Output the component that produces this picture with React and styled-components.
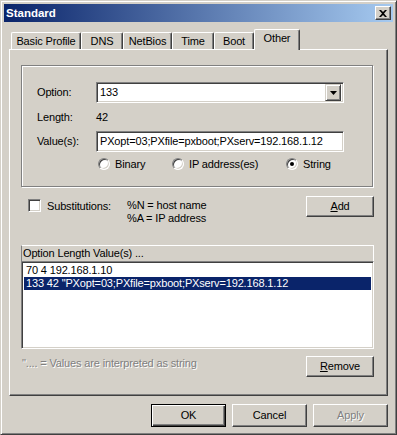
import React from 'react';
import styled, { createGlobalStyle, css } from 'styled-components';

const FACE = '#D4D0C8';
const SHADOW = '#808080';
const DARK = '#404040';
const HILITE = '#FFFFFF';
const NAVY = '#0A246A';

const GlobalStyle = createGlobalStyle`
  html, body { margin: 0; padding: 0; background: ${FACE}; }
  body {
    font-family: "Liberation Sans", Arial, sans-serif;
    font-size: 11px;
    line-height: 13px;
    letter-spacing: -0.15px;
    color: #000;
  }
  * { box-sizing: border-box; }
`;

const Window = styled.div`
  width: 397px;
  height: 435px;
  background: ${FACE};
  border: 1px solid;
  border-color: ${FACE} ${DARK} ${DARK} ${FACE};
  box-shadow: inset 1px 1px ${HILITE}, inset -1px -1px ${SHADOW};
  padding: 3px;
  display: flex;
  flex-direction: column;
`;

const TitleBar = styled.div`
  height: 18px;
  display: flex;
  align-items: center;
  justify-content: space-between;
  padding: 0 2px 0 2px;
  background: linear-gradient(to right, ${NAVY}, #A6CAF0);
`;

const Title = styled.span`
  color: #fff;
  font-weight: bold;
  font-size: 11.5px;
  letter-spacing: 0;
`;

const CloseBtn = styled.div`
  width: 16px;
  height: 14px;
  background: ${FACE};
  border: 1px solid;
  border-color: ${HILITE} ${DARK} ${DARK} ${HILITE};
  box-shadow: inset -1px -1px ${SHADOW};
  display: flex;
  align-items: center;
  justify-content: center;
  padding-right: 1px;
`;

const Body = styled.div`
  padding: 7px 5px 0;
  display: flex;
  flex-direction: column;
`;

const TabStrip = styled.div`
  height: 20px;
  display: flex;
  align-items: flex-end;
  padding-left: 2px;
  position: relative;
  z-index: 1;
`;

const Tab = styled.div`
  width: ${(p) => p.$w}px;
  height: ${(p) => (p.$active ? 21 : 17)}px;
  margin-bottom: ${(p) => (p.$active ? -1 : 0)}px;
  background: ${FACE};
  border-top: 1px solid ${HILITE};
  border-left: 1px solid ${HILITE};
  border-right: 1px solid ${DARK};
  border-radius: 2px 2px 0 0;
  box-shadow: inset -1px 0 ${SHADOW};
  display: flex;
  justify-content: center;
  align-items: flex-start;
  padding-top: 2px;
  white-space: nowrap;
`;

const Panel = styled.div`
  height: 347px;
  border: 1px solid;
  border-color: ${HILITE} ${DARK} ${DARK} ${HILITE};
  box-shadow: inset -1px -1px ${SHADOW};
  padding: 15px 13px 0 11px;
  display: flex;
  flex-direction: column;
`;

const GroupBox = styled.div`
  width: 352px;
  height: 122px;
  border: 1px solid ${SHADOW};
  box-shadow: 1px 1px 0 ${HILITE}, inset 1px 1px 0 ${HILITE};
  padding: 16px 0 0 15px;
  display: grid;
  grid-template-columns: 59px 248px;
  grid-template-rows: 21px 28px 21px 24px;
  align-items: center;
`;

const Label = styled.span`
  white-space: nowrap;
`;

const Value = styled.span`
  padding-left: 0;
`;

const Sunken = css`
  background: #fff;
  border: 1px solid;
  border-color: ${SHADOW} ${HILITE} ${HILITE} ${SHADOW};
  box-shadow: inset 1px 1px ${DARK}, inset -1px -1px ${FACE};
`;

const Combo = styled.div`
  ${Sunken}
  height: 21px;
  display: flex;
  align-items: center;
  padding: 2px 2px 2px 3px;
`;

const ComboText = styled.span`
  flex: 1;
`;

const DropBtn = styled.div`
  width: 16px;
  height: 17px;
  background: ${FACE};
  border: 1px solid;
  border-color: ${FACE} ${DARK} ${DARK} ${FACE};
  box-shadow: inset 1px 1px ${HILITE}, inset -1px -1px ${SHADOW};
  display: flex;
  align-items: center;
  justify-content: center;
`;

const TextInput = styled.div`
  ${Sunken}
  height: 21px;
  display: flex;
  align-items: center;
  padding: 0 3px;
  white-space: nowrap;
  overflow: hidden;
`;

const RadioRow = styled.div`
  grid-column: 2;
  display: grid;
  grid-template-columns: 74px 114px auto;
  padding-left: 2px;
  align-items: center;
`;

const RadioItem = styled.label`
  display: flex;
  align-items: center;
  gap: 5px;
  white-space: nowrap;
`;

const RadioCircle = styled.span`
  position: relative;
  width: 12px;
  height: 12px;
  border-radius: 50%;
  background: #fff;
  border: 1px solid;
  border-color: ${SHADOW} ${HILITE} ${HILITE} ${SHADOW};
  box-shadow: inset 1px 1px ${DARK}, inset -1px -1px ${FACE};
  ${(p) =>
    p.$checked &&
    css`
      &::after {
        content: '';
        position: absolute;
        left: 3px;
        top: 3px;
        width: 4px;
        height: 4px;
        border-radius: 50%;
        background: #000;
      }
    `}
`;

const SubRow = styled.div`
  margin-top: 9px;
  display: flex;
  align-items: flex-start;
`;

const CheckBox = styled.span`
  width: 13px;
  height: 13px;
  margin: 3px 0 0 7px;
  ${Sunken}
`;

const SubLabel = styled.span`
  width: 80px;
  margin: 4px 0 0 6px;
`;

const VarList = styled.div`
  flex: 1;
  margin-top: 3px;
  display: flex;
  flex-direction: column;
`;

const Button = styled.button`
  width: ${(p) => p.$w}px;
  height: ${(p) => p.$h}px;
  flex: none;
  padding: 0;
  font: inherit;
  font-size: 11px;
  letter-spacing: -0.15px;
  color: #000;
  background: ${FACE};
  border: 1px solid;
  border-color: ${HILITE} ${DARK} ${DARK} ${HILITE};
  box-shadow: inset -1px -1px ${SHADOW}, inset 1px 1px ${FACE};
  ${(p) =>
    p.$default &&
    css`
      border-color: #000;
      box-shadow: inset 1px 1px ${HILITE}, inset -1px -1px ${DARK},
        inset -2px -2px ${SHADOW};
    `}
  ${(p) =>
    p.disabled &&
    css`
      color: ${SHADOW};
      text-shadow: 1px 1px 0 ${HILITE};
    `}
`;

const ListHeader = styled.div`
  margin-top: 20px;
  height: 16px;
  border-top: 1px solid ${HILITE};
  border-left: 1px solid ${SHADOW};
  border-right: 1px solid ${HILITE};
  padding: 1px 0 0 1px;
  white-space: nowrap;
`;

const ListBox = styled.div`
  ${Sunken}
  height: 88px;
  padding: 2px;
  display: flex;
  flex-direction: column;
`;

const ListRow = styled.div`
  height: 13px;
  padding-left: 2px;
  white-space: nowrap;
  ${(p) =>
    p.$selected &&
    css`
      background: ${NAVY};
      color: #fff;
    `}
`;

const NoteRow = styled.div`
  margin-top: 7px;
  display: flex;
  justify-content: space-between;
  align-items: flex-start;
`;

const Note = styled.span`
  margin: 1px 0 0 1px;
  color: ${SHADOW};
  text-shadow: 1px 1px 0 ${HILITE};
`;

const Footer = styled.div`
  margin-top: 8px;
  display: flex;
  justify-content: flex-end;
  gap: 6px;
`;

const tabs = [
  { label: 'Basic Profile', w: 70 },
  { label: 'DNS', w: 42 },
  { label: 'NetBios', w: 49 },
  { label: 'Time', w: 42 },
  { label: 'Boot', w: 40 },
  { label: 'Other', w: 46, active: true },
];

export default function App() {
  return (
    <>
      <GlobalStyle />
      <Window>
        <TitleBar>
          <Title>Standard</Title>
          <CloseBtn>
            <svg width="8" height="7" viewBox="0 0 8 7">
              <path d="M0 0h2l2 2 2-2h2L5 3.5 8 7H6L4 5 2 7H0l3-3.5z" fill="#000" />
            </svg>
          </CloseBtn>
        </TitleBar>
        <Body>
          <TabStrip>
            {tabs.map((t) => (
              <Tab key={t.label} $w={t.w} $active={t.active}>
                {t.label}
              </Tab>
            ))}
          </TabStrip>
          <Panel>
            <GroupBox>
              <Label>Option:</Label>
              <Combo>
                <ComboText>133</ComboText>
                <DropBtn>
                  <svg width="7" height="4" viewBox="0 0 7 4">
                    <path d="M0 0h7L3.5 4z" fill="#000" />
                  </svg>
                </DropBtn>
              </Combo>
              <Label>Length:</Label>
              <Value>42</Value>
              <Label>Value(s):</Label>
              <TextInput>PXopt=03;PXfile=pxboot;PXserv=192.168.1.12</TextInput>
              <RadioRow>
                <RadioItem>
                  <RadioCircle />
                  Binary
                </RadioItem>
                <RadioItem>
                  <RadioCircle />
                  IP address(es)
                </RadioItem>
                <RadioItem>
                  <RadioCircle $checked />
                  String
                </RadioItem>
              </RadioRow>
            </GroupBox>

            <SubRow>
              <CheckBox />
              <SubLabel>Substitutions:</SubLabel>
              <VarList>
                <span>%N = host name</span>
                <span>%A = IP address</span>
              </VarList>
              <Button $w={68} $h={21}>
                <u>A</u>dd
              </Button>
            </SubRow>

            <ListHeader>Option Length Value(s) ...</ListHeader>
            <ListBox>
              <ListRow>70 4 192.168.1.10</ListRow>
              <ListRow $selected>133 42 "PXopt=03;PXfile=pxboot;PXserv=192.168.1.12</ListRow>
            </ListBox>

            <NoteRow>
              <Note>".... = Values are interpreted as string</Note>
              <Button $w={68} $h={21}>
                <u>R</u>emove
              </Button>
            </NoteRow>
          </Panel>
          <Footer>
            <Button $w={75} $h={23} $default>
              OK
            </Button>
            <Button $w={75} $h={23}>
              Cancel
            </Button>
            <Button $w={75} $h={23} disabled>
              Apply
            </Button>
          </Footer>
        </Body>
      </Window>
    </>
  );
}
